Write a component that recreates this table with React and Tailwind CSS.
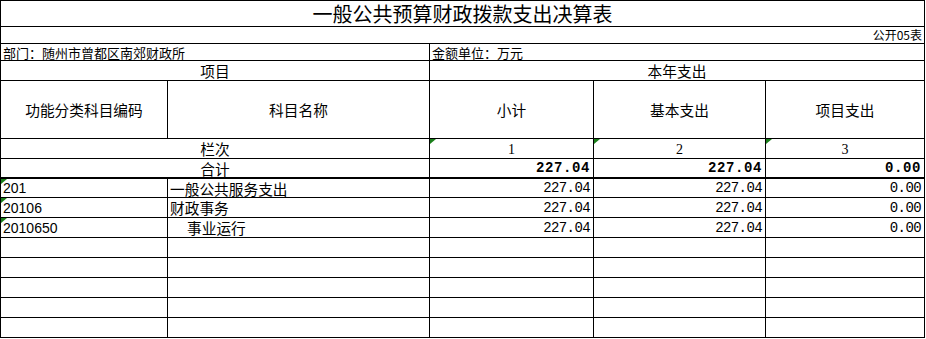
import React from 'react';

const rows = [
  { code: '201', name: '一般公共服务支出', indent: false, sub: '227.04', basic: '227.04', proj: '0.00' },
  { code: '20106', name: '财政事务', indent: false, sub: '227.04', basic: '227.04', proj: '0.00' },
  { code: '2010650', name: '事业运行', indent: true, sub: '227.04', basic: '227.04', proj: '0.00' },
];

const blankRows = [0, 1, 2, 3, 4];

// little green corner flag, like excel's "number stored as text" marker
const Flag = () => (
  <svg className="absolute left-0 top-0" width="6" height="6" viewBox="0 0 6 6">
    <polygon points="0,0 6,0 0,5" fill="#1a7f1a" />
  </svg>
);

const Cell = ({ className = '', flag, children }) => (
  <div className={`relative bg-white flex items-center whitespace-nowrap ${className}`}>
    {flag && <Flag />}
    {children}
  </div>
);

const numCls = "justify-end pr-[3px] font-['Liberation_Mono',monospace] text-[14px] leading-[16px] tracking-[-0.6px] text-black";
const totCls = "justify-end pr-[3px] font-['Liberation_Mono',monospace] text-[14px] leading-[16px] font-bold tracking-[0.6px] border-b border-black";

export default function App() {
  return (
    <div className="w-[926px] h-[339px] bg-white font-['Noto_Sans_CJK_SC',sans-serif] text-black">
      <div className="w-[925px] grid grid-cols-[166px_261px_163px_171px_158px] grid-rows-[25px_16px_16px_19px_57px_19px_19px_18px_19px_19px_19px_19px_19px_19px_19px] gap-px bg-black border border-black">
        {/* title */}
        <Cell className="col-span-5 justify-center text-[20px] leading-[24px]">
          一般公共预算财政拨款支出决算表
        </Cell>
        <Cell className="col-span-5 justify-end pr-[2px] text-[12px] leading-[14px]">公开05表</Cell>

        {/* dept / unit */}
        <Cell className="col-span-2 pl-[2px] pt-[1px] text-[13px] leading-[15px]">部门：随州市曾都区南郊财政所</Cell>
        <Cell className="col-span-3 pl-[2px] pt-[1px] text-[13px] leading-[15px]">金额单位：万元</Cell>

        {/* header */}
        <Cell className="col-span-2 justify-center text-[14.7px] leading-[17px]">项目</Cell>
        <Cell className="col-span-3 justify-center text-[14.7px] leading-[17px]">本年支出</Cell>

        <Cell className="justify-center text-[14.7px] leading-[17px]">功能分类科目编码</Cell>
        <Cell className="justify-center text-[14.7px] leading-[17px]">科目名称</Cell>
        <Cell className="justify-center text-[14.7px] leading-[17px]">小计</Cell>
        <Cell className="justify-center text-[14.7px] leading-[17px]">基本支出</Cell>
        <Cell className="justify-center text-[14.7px] leading-[17px]">项目支出</Cell>

        {/* column numbers */}
        <Cell className="col-span-2 justify-center text-[14.7px] leading-[17px]">栏次</Cell>
        <Cell flag className="justify-center pt-[2px] font-['Liberation_Serif',serif] text-[14px] leading-[16px]">1</Cell>
        <Cell flag className="justify-center pt-[2px] font-['Liberation_Serif',serif] text-[14px] leading-[16px]">2</Cell>
        <Cell flag className="justify-center pt-[2px] font-['Liberation_Serif',serif] text-[14px] leading-[16px]">3</Cell>

        {/* total, thick rule under it */}
        <Cell className="col-span-2 justify-center text-[14.7px] leading-[17px] border-b border-black">合计</Cell>
        <Cell className={totCls}>227.04</Cell>
        <Cell className={totCls}>227.04</Cell>
        <Cell className={totCls}>0.00</Cell>

        {rows.map((r) => (
          <React.Fragment key={r.code}>
            <Cell flag className="pl-[2px] font-['Liberation_Sans',sans-serif] text-[14px] leading-[16px]">{r.code}</Cell>
            <Cell className={`${r.indent ? 'pl-[19px]' : 'pl-[2px]'} text-[14.7px] leading-[17px]`}>{r.name}</Cell>
            <Cell className={numCls}>{r.sub}</Cell>
            <Cell className={numCls}>{r.basic}</Cell>
            <Cell className={numCls}>{r.proj}</Cell>
          </React.Fragment>
        ))}

        {blankRows.map((i) => (
          <React.Fragment key={i}>
            <Cell />
            <Cell />
            <Cell />
            <Cell />
            <Cell />
          </React.Fragment>
        ))}
      </div>
    </div>
  );
}
